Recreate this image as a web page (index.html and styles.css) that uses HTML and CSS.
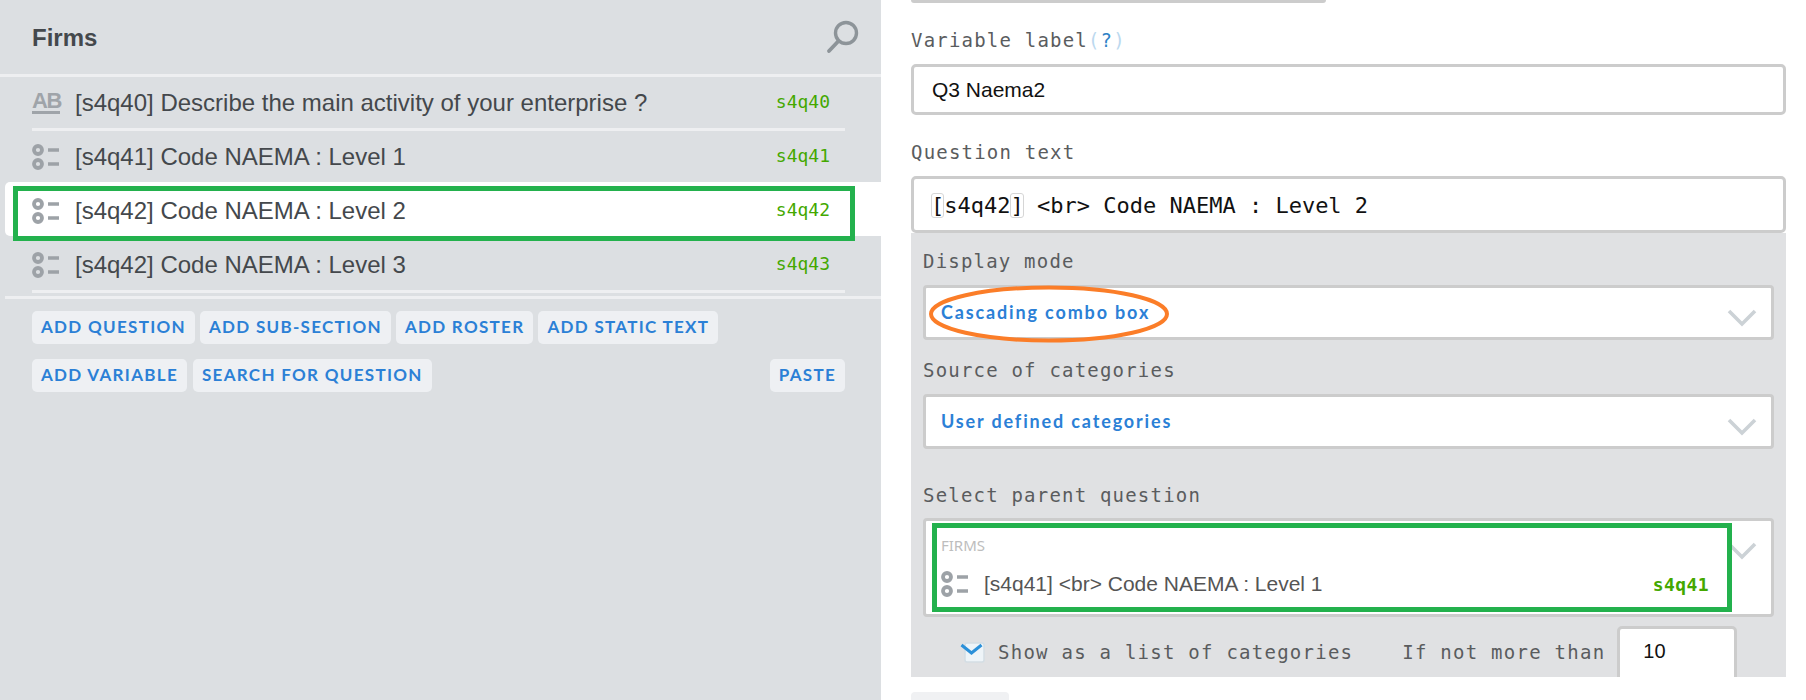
FILE: index.html
```html
<!DOCTYPE html>
<html lang="en">
<head>
  <meta charset="UTF-8">
  <meta name="viewport" content="width=device-width, initial-scale=1.0">
  <title>Questionnaire editor</title>
  <link rel="stylesheet" href="styles.css">
</head>
<body>

  <svg class="icon-defs" width="0" height="0">
    <symbol id="icon-list" viewBox="0 0 28 26">
      <circle cx="6" cy="6" r="4" fill="none" stroke-width="3.8"/>
      <circle cx="6" cy="20" r="4" fill="none" stroke-width="3.8"/>
      <path d="M16 6h11M16 20h11" fill="none" stroke-width="3.6"/>
    </symbol>
    <symbol id="icon-chevron" viewBox="0 0 30 18">
      <path d="M2 2l13 13L28 2" fill="none" stroke-width="3.6"/>
    </symbol>
  </svg>

  <div class="page">
    <section class="tree">
      <header class="tree-head">
        <h2>Firms</h2>
        <svg class="icon-search" viewBox="0 0 34 34">
          <circle cx="20" cy="13" r="10.5" fill="none" stroke-width="3.4"/>
          <path d="M12.5 21L3 31" fill="none" stroke-width="3.8" stroke-linecap="round"/>
        </svg>
      </header>

      <div class="row">
        <div class="row-body">
          <span class="icon-ab">AB</span>
          <span class="row-text">[s4q40] Describe the main activity of your enterprise ?</span>
          <span class="var-name">s4q40</span>
        </div>
      </div>
      <div class="row no-line">
        <div class="row-body">
          <svg class="icon-list"><use href="#icon-list"/></svg>
          <span class="row-text">[s4q41] Code NAEMA : Level 1</span>
          <span class="var-name">s4q41</span>
        </div>
      </div>
      <div class="row selected">
        <div class="row-body">
          <svg class="icon-list"><use href="#icon-list"/></svg>
          <span class="row-text">[s4q42] Code NAEMA : Level 2</span>
          <span class="var-name">s4q42</span>
        </div>
        <div class="mark-row"></div>
      </div>
      <div class="row after-selected">
        <div class="row-body">
          <svg class="icon-list"><use href="#icon-list"/></svg>
          <span class="row-text">[s4q42] Code NAEMA : Level 3</span>
          <span class="var-name">s4q43</span>
        </div>
      </div>

      <div class="tree-end"></div>

      <div class="toolbar">
        <div class="btn-line">
          <button class="btn">ADD QUESTION</button>
          <button class="btn">ADD SUB-SECTION</button>
          <button class="btn">ADD ROSTER</button>
          <button class="btn">ADD STATIC TEXT</button>
        </div>
        <div class="btn-line wide">
          <button class="btn">ADD VARIABLE</button>
          <button class="btn">SEARCH FOR QUESTION</button>
          <button class="btn paste">PASTE</button>
        </div>
      </div>
    </section>

    <section class="editor">
      <div class="cut-input"></div>

      <label class="field-label">Variable label<span class="help"><i>(</i>?<i>)</i></span></label>
      <div class="text-input sans">Q3 Naema2</div>

      <label class="field-label">Question text</label>
      <div class="text-input mono"><span class="brace">[</span>s4q42<span class="brace">]</span> &lt;br&gt; Code NAEMA : Level 2</div>

      <div class="panel">
        <label class="field-label first">Display mode</label>
        <div class="select">
          <span class="select-value">Cascading combo box</span>
          <svg class="chevron"><use href="#icon-chevron"/></svg>
          <svg class="mark-oval" viewBox="0 0 240 58">
            <ellipse cx="120" cy="29" rx="118" ry="26.5" fill="none" stroke="#fb7d28" stroke-width="4"/>
          </svg>
        </div>

        <label class="field-label second">Source of categories</label>
        <div class="select">
          <span class="select-value">User defined categories</span>
          <svg class="chevron"><use href="#icon-chevron"/></svg>
        </div>

        <label class="field-label third">Select parent question</label>
        <div class="select parent">
          <svg class="chevron"><use href="#icon-chevron"/></svg>
          <div class="parent-box">
            <div class="parent-group">FIRMS</div>
            <div class="parent-item">
              <svg class="icon-list"><use href="#icon-list"/></svg>
              <span class="parent-text">[s4q41] &lt;br&gt; Code NAEMA : Level 1</span>
              <span class="parent-var">s4q41</span>
            </div>
          </div>
        </div>

        <div class="list-option">
          <svg class="check" viewBox="0 0 26 22">
            <rect x="5" y="2" width="19" height="19" rx="2" fill="#eef4f8" stroke="#d3dde4" stroke-width="1.5"/>
            <path d="M1.5 4l10 8 10-8" fill="none" stroke="#2b90d9" stroke-width="3"/>
          </svg>
          <span class="option-text">Show as a list of categories</span>
          <span class="option-text limit">If not more than</span>
          <div class="limit-input">10</div>
        </div>
      </div>

      <div class="next-btn"></div>
    </section>
  </div>

</body>
</html>
```

FILE: styles.css
```css
html, body {
  margin: 0;
  padding: 0;
  height: 700px;
  overflow: hidden;
  background: #fff;
}

.icon-defs {
  display: block;
  height: 0;
}

.page {
  display: flex;
  height: 700px;
}

/* left column */
.tree {
  width: 881px;
  flex: none;
  background-color: #dcdfe2;
  font-family: "Liberation Sans", Arial, sans-serif;
  color: #44484c;
}

.tree-head {
  display: flex;
  align-items: center;
  justify-content: space-between;
  height: 74px;
  padding: 0 21px 0 32px;
  border-bottom: 3px solid #eeeff1;
}

.tree-head h2 {
  margin: 1px 0 0;
  font-size: 24px;
  font-weight: bold;
  color: #44484c;
}

.icon-search {
  width: 34px;
  height: 34px;
  stroke: #8d9499;
}

.row {
  position: relative;
  margin-left: 5px;
  padding-left: 27px;
}

.row-body {
  display: flex;
  align-items: center;
  height: 51px;
  margin-right: 36px;
  padding-right: 15px;
  border-bottom: 3px solid #eeeff1;
}

.row.no-line .row-body {
  border-bottom: 0;
}

.row.selected {
  background-color: #fff;
  padding-top: 3px;
  border-radius: 5px 0 0 5px;
}

.row.selected .row-body {
  border-bottom: 0;
}

.row.after-selected {
  padding-top: 3px;
}

.row-text {
  flex: 1;
  font-size: 24px;
}

.var-name {
  font-family: "DejaVu Sans Mono", monospace;
  font-size: 18px;
  color: #44a800;
  margin-bottom: 3px;
}

.icon-ab {
  width: 28px;
  margin-right: 15px;
  font-family: "Liberation Sans", Arial, sans-serif;
  font-size: 22px;
  font-weight: bold;
  letter-spacing: -1.5px;
  line-height: 20px;
  text-align: center;
  color: #9fa4a9;
  border-bottom: 3px solid #9fa4a9;
  margin-bottom: 1px;
}

.icon-list {
  width: 28px;
  height: 26px;
  margin-right: 15px;
  stroke: #9da2a7;
  flex: none;
}

.mark-row {
  position: absolute;
  left: 8px;
  top: 4px;
  width: 832px;
  height: 45px;
  border: 5px solid #23b14d;
}

.tree-end {
  height: 3px;
  margin: 3px 0 0 5px;
  background-color: #eeeff1;
}

.toolbar {
  display: flex;
  flex-direction: column;
  gap: 15px;
  margin: 12px 36px 0 32px;
}

.btn-line {
  display: flex;
  gap: 5px;
}

.btn-line.wide {
  gap: 6px;
}

.btn {
  height: 33px;
  padding: 0 9px 2px;
  border: none;
  border-radius: 5px;
  background-color: #eef0f3;
  color: #2b80d6;
  font-family: Lato, "Noto Sans", sans-serif;
  font-size: 17px;
  font-weight: bold;
  letter-spacing: 1.3px;
  white-space: nowrap;
}

.btn.paste {
  margin-left: auto;
}

/* right column */
.editor {
  flex: 1;
  padding: 0 20px 0 30px;
  overflow: hidden;
}

.cut-input {
  width: 415px;
  height: 3px;
  background-color: #ccc;
  border-radius: 0 0 4px 4px;
}

.field-label {
  display: block;
  height: 28px;
  margin: 23px 0 10px;
  font-family: "DejaVu Sans Mono", monospace;
  font-size: 19px;
  line-height: 28px;
  letter-spacing: 1.2px;
  color: #5a5c5e;
}

.help {
  color: #2e82c6;
}

.help i {
  font-style: normal;
  color: #bcd9ef;
}

.text-input {
  display: flex;
  align-items: center;
  box-sizing: border-box;
  height: 51px;
  padding-left: 18px;
  border: 3px solid #ccc;
  border-radius: 5px;
  background-color: #fff;
  color: #111;
  white-space: pre;
}

.text-input.sans {
  font-family: "Liberation Sans", Arial, sans-serif;
  font-size: 21px;
}

.text-input.mono {
  height: 57px;
  padding-left: 17px;
  padding-top: 2px;
  font-family: "DejaVu Sans Mono", monospace;
  font-size: 22px;
}

.brace {
  outline: 1px solid #d6d6d6;
  outline-offset: -1px;
  border-radius: 3px;
}

.panel {
  height: 444px;
  box-sizing: border-box;
  padding: 0 12px;
  background-color: #e0e1e3;
  overflow: hidden;
}

.field-label.first {
  margin-top: 14px;
}

.field-label.second {
  margin-top: 16px;
}

.field-label.third {
  margin-top: 32px;
  margin-bottom: 9px;
}

.select {
  position: relative;
  display: flex;
  align-items: center;
  box-sizing: border-box;
  height: 55px;
  padding-left: 15px;
  padding-bottom: 2px;
  border: 3px solid #ccc;
  border-radius: 4px;
  background-color: #fff;
}

.select-value {
  font-family: Lato, "Noto Sans", sans-serif;
  font-size: 18px;
  font-weight: bold;
  letter-spacing: 1.85px;
  color: #2b80d6;
}

.chevron {
  position: absolute;
  right: 14px;
  top: 21px;
  width: 30px;
  height: 18px;
  stroke: #ccd2d6;
}

.mark-oval {
  position: absolute;
  left: 3px;
  top: -3px;
  width: 240px;
  height: 58px;
}

.select.parent {
  height: 99px;
  padding: 0;
}

.select.parent .chevron {
  top: 21px;
}

.parent-box {
  position: absolute;
  left: 6px;
  top: 2px;
  box-sizing: border-box;
  width: 800px;
  height: 89px;
  padding: 8px 18px 0 4px;
  border: 5px solid #23b14d;
  background-color: #fff;
}

.parent-group {
  font-family: "Noto Sans", sans-serif;
  font-size: 15px;
  line-height: 18px;
  color: #bdbdbd;
}

.parent-item {
  display: flex;
  align-items: center;
  height: 30px;
  margin-top: 15px;
}

.parent-text {
  flex: 1;
  font-family: "Liberation Sans", Arial, sans-serif;
  font-size: 21px;
  color: #555;
}

.parent-var {
  font-family: "DejaVu Sans Mono", monospace;
  font-size: 18px;
  font-weight: bold;
  letter-spacing: 0.4px;
  color: #44a800;
}

.list-option {
  display: flex;
  align-items: center;
  height: 54px;
  margin-top: 8px;
  padding-left: 37px;
}

.check {
  width: 26px;
  height: 22px;
  margin-right: 12px;
}

.option-text {
  font-family: "DejaVu Sans Mono", monospace;
  font-size: 19px;
  letter-spacing: 1.25px;
  color: #5a5c5e;
}

.option-text.limit {
  margin-left: 49px;
}

.limit-input {
  box-sizing: border-box;
  width: 120px;
  height: 60px;
  margin: 8px 0 0 12px;
  padding: 11px 0 0 23px;
  border: 3px solid #ccc;
  border-radius: 5px;
  background-color: #fff;
  font-family: "Liberation Sans", Arial, sans-serif;
  font-size: 20px;
  color: #111;
}

.next-btn {
  width: 98px;
  height: 23px;
  margin-top: 15px;
  border-radius: 4px 4px 0 0;
  background-color: #f0f1f3;
}
```
